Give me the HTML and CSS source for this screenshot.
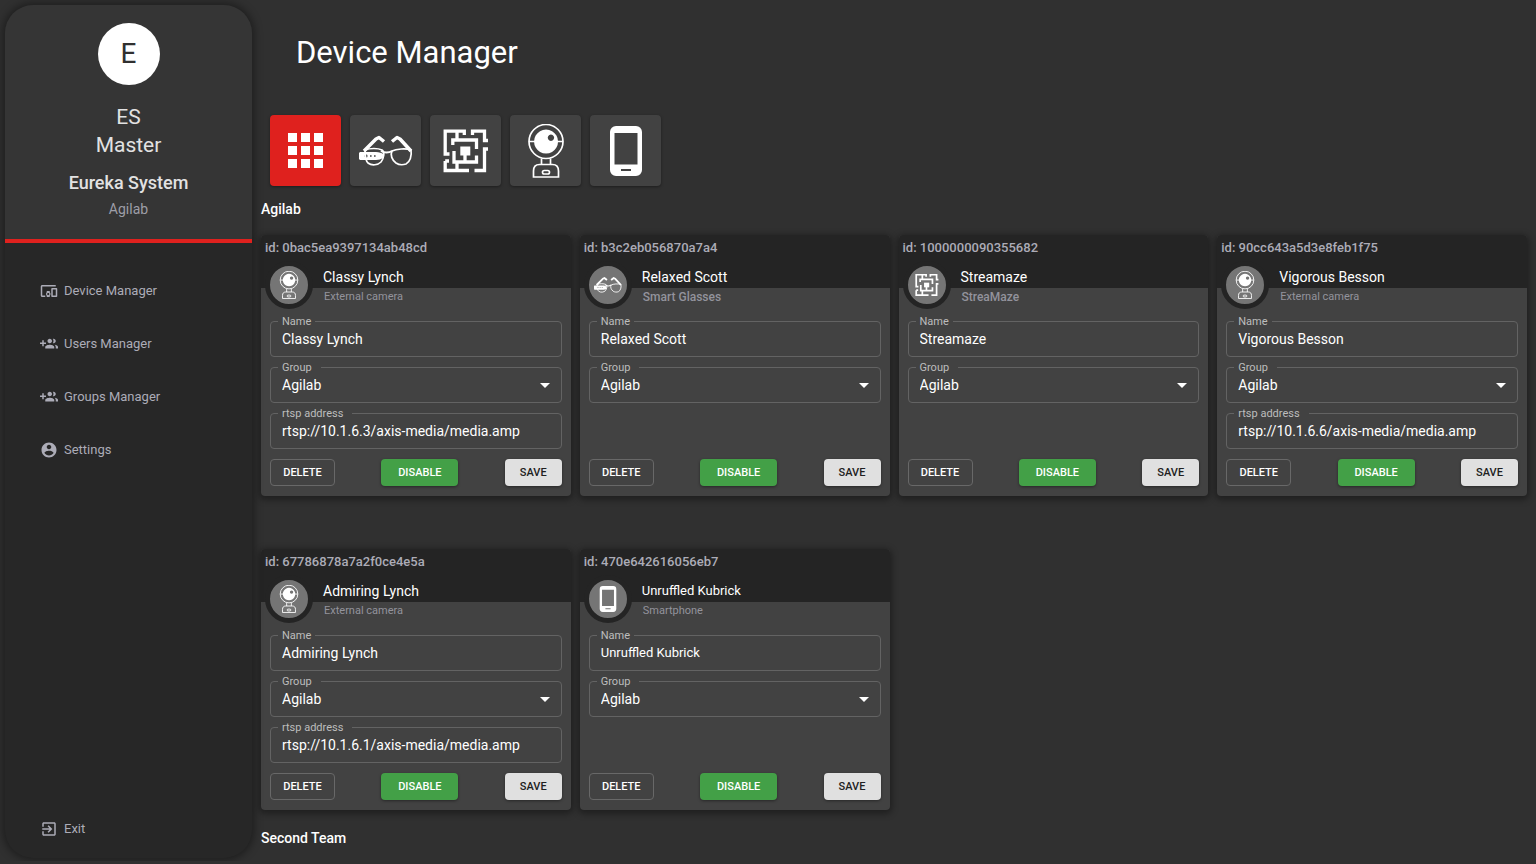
FILE: index.html
```html
<!DOCTYPE html>
<html lang="en">
<head>
    <meta charset="UTF-8">
    <meta name="viewport" content="width=device-width, initial-scale=1.0">
    <title>Device Manager</title>
    <link rel="stylesheet" href="styles.css">
</head>
<body>
    <svg class="sprite" aria-hidden="true">
        <symbol id="glasses" viewBox="0 0 54 54">
            <g fill="none" stroke="currentColor" stroke-linejoin="round">
                <path stroke-width="3.500" d="M5 27 17 15l3-1.500 5 4M52 27 41 15l-3-1.500-5 4"/>
                <path stroke-width="1.700" d="M6 26c5-2 13-2 17 0 3 2 2 8-1 12-3 3-9 4-13 1-2-2-3-5-3-13zM33 27c4-2 14-3 19-1 1 6-1 12-5 14-3 1-7 1-10-1-4-3-6-8-4-12z"/>
                <path stroke-width="2" d="M22 27c3 2 8 2 11 0"/>
            </g>
            <path fill="currentColor" fill-rule="evenodd" d="M1 28h16c3 0 6 1 7 2v4c-2 1-4 2-7 2H1l-1-1v-6zM7 30.500a1.500 1.500 0 1 0 .1 3 1.500 1.500 0 0 0-.1-3zM11 31.200v1.600h1.600v-1.600zM15 31.200v1.600h1.600v-1.600z"/>
        </symbol>
        <symbol id="maze" viewBox="0 0 54 54">
            <path fill="none" stroke="currentColor" stroke-width="3.300" d="M10.500 30H6.200V7.200H25.300V11M18 7v9M33.500 11V7.200H45.500V16.500H49M49 25H45.500V46.500H35.500M6.200 37V46.500H30M6.200 37H10M18 47V38M13.800 21V16H37.500V25M15 27V38H37.500V31.500M26 31V38"/>
            <path fill="currentColor" d="M21.300 22.500h10v9h-10z"/>
        </symbol>
        <symbol id="webcam" viewBox="0 0 54 54">
            <g fill="none" stroke="currentColor" stroke-width="1.700">
                <circle cx="27" cy="17.500" r="17"/>
                <path d="M10 17.500h6M38 17.500h6M22.500 34.500v6M31.500 34.500v6M14.500 53v-6c0-4 2-6.500 6-6.500h13c4 0 6 2.500 6 6.500v6z"/>
                <rect x="23.500" y="46.500" width="7" height="3.500" rx="1.700"/>
            </g>
            <path fill="currentColor" fill-rule="evenodd" d="M27 5.500a12 12 0 1 0 .1 0zM32 10.500a3.200 3.200 0 1 1-.1 0z"/>
        </symbol>
        <symbol id="phone" viewBox="0 0 54 54">
            <path fill="currentColor" fill-rule="evenodd" d="M17 2h20a6 6 0 0 1 6 6v38a6 6 0 0 1-6 6H17a6 6 0 0 1-6-6V8a6 6 0 0 1 6-6zM15.500 9v31.500h23V9zM22 45v2h10v-2z"/>
        </symbol>
        <symbol id="grid" viewBox="0 0 54 54">
            <path fill="currentColor" d="M9 9h9v9H9zM22 9h9v9H22zM35 9h9v9H35zM9 22h9v9H9zM22 22h9v9H22zM35 22h9v9H35zM9 35h9v9H9zM22 35h9v9H22zM35 35h9v9H35z"/>
        </symbol>
        <symbol id="devices" viewBox="0 0 24 24">
            <path fill="currentColor" d="M3 6h18V4H3c-1.100 0-2 .9-2 2v12c0 1.100.9 2 2 2h4v-2H3V6zm10 6H9v1.780c-.61.550-1 1.330-1 2.220s.39 1.670 1 2.220V20h4v-1.780c.61-.55 1-1.340 1-2.220s-.39-1.670-1-2.220V12zm-2 5.500c-.83 0-1.500-.67-1.500-1.500s.67-1.500 1.500-1.500 1.500.67 1.500 1.500-.67 1.500-1.500 1.500zM22 8h-6c-.5 0-1 .5-1 1v10c0 .5.5 1 1 1h6c.5 0 1-.5 1-1V9c0-.5-.5-1-1-1zm-1 10h-4v-8h4v8z"/>
        </symbol>
        <symbol id="group-add" viewBox="0 0 24 24">
            <path fill="currentColor" d="M8 10H5V7H3v3H0v2h3v3h2v-3h3v-2zm10 1c1.660 0 2.990-1.340 2.990-3S19.660 5 18 5c-.32 0-.63.050-.91.140.57.810.9 1.790.9 2.860s-.34 2.040-.9 2.860c.28.090.59.140.91.140zm-5 0c1.660 0 2.990-1.340 2.990-3S14.660 5 13 5s-3 1.340-3 3 1.340 3 3 3zm6.620 2.160c.83.730 1.380 1.660 1.380 2.840v2h3v-2c0-1.540-2.370-2.490-4.380-2.840zM13 13c-2 0-6 1-6 3v2h12v-2c0-2-4-3-6-3z"/>
        </symbol>
        <symbol id="account" viewBox="0 0 24 24">
            <path fill="currentColor" d="M12 2C6.480 2 2 6.480 2 12s4.480 10 10 10 10-4.480 10-10S17.520 2 12 2zm0 3c1.660 0 3 1.340 3 3s-1.340 3-3 3-3-1.340-3-3 1.340-3 3-3zm0 14.200c-2.500 0-4.710-1.280-6-3.220.03-1.990 4-3.080 6-3.080 1.990 0 5.970 1.090 6 3.080-1.290 1.940-3.500 3.220-6 3.220z"/>
        </symbol>
        <symbol id="exit" viewBox="0 0 24 24">
            <path fill="currentColor" d="M10.090 15.590 11.500 17l5-5-5-5-1.410 1.410L12.670 11H3v2h9.670l-2.580 2.590zM19 3H5c-1.110 0-2 .9-2 2v4h2V5h14v14H5v-4H3v4c0 1.100.89 2 2 2h14c1.100 0 2-.9 2-2V5c0-1.100-.9-2-2-2z"/>
        </symbol>
    </svg>

    <aside class="sidebar">
        <div class="profile">
            <div class="profile-avatar">E</div>
            <div class="profile-name">ES<br>Master</div>
            <div class="profile-company">Eureka System</div>
            <div class="profile-group">Agilab</div>
        </div>
        <nav class="menu">
            <a href="#" class="link"><svg><use href="#devices"/></svg>Device Manager</a>
            <a href="#" class="link"><svg><use href="#group-add"/></svg>Users Manager</a>
            <a href="#" class="link"><svg><use href="#group-add"/></svg>Groups Manager</a>
            <a href="#" class="link"><svg><use href="#account"/></svg>Settings</a>
            <a href="#" class="link exit"><svg><use href="#exit"/></svg>Exit</a>
        </nav>
    </aside>

    <main class="content">
        <h1>Device Manager</h1>
        <div class="filters">
            <button class="filter active" aria-label="All devices"><svg><use href="#grid"/></svg></button>
            <button class="filter" aria-label="Smart glasses"><svg><use href="#glasses"/></svg></button>
            <button class="filter" aria-label="StreaMaze"><svg><use href="#maze"/></svg></button>
            <button class="filter" aria-label="External camera"><svg><use href="#webcam"/></svg></button>
            <button class="filter" aria-label="Smartphone"><svg><use href="#phone"/></svg></button>
        </div>

        <h2>Agilab</h2>
        <div class="cards">
            <form class="card">
                <div class="card-header">
                    <div class="card-id">id: 0bac5ea9397134ab48cd</div>
                    <div class="card-device">
                        <div class="card-icon"><svg><use href="#webcam"/></svg></div>
                        <div>
                            <div class="card-name">Classy Lynch</div>
                            <div class="card-type">External camera</div>
                        </div>
                    </div>
                </div>
                <div class="card-fields">
                    <fieldset class="field">
                        <legend><label for="name1">Name</label></legend>
                        <input type="text" id="name1" value="Classy Lynch">
                    </fieldset>
                    <fieldset class="field select">
                        <legend><label for="group1">Group</label></legend>
                        <select id="group1"><option>Agilab</option><option>Second Team</option></select>
                    </fieldset>
                    <fieldset class="field address">
                        <legend><label for="rtsp1">rtsp address</label></legend>
                        <input type="text" id="rtsp1" value="rtsp://10.1.6.3/axis-media/media.amp">
                    </fieldset>
                </div>
                <div class="card-actions">
                    <button type="button" class="btn delete">DELETE</button>
                    <button type="button" class="btn disable">DISABLE</button>
                    <button type="button" class="btn save">SAVE</button>
                </div>
            </form>

            <form class="card">
                <div class="card-header">
                    <div class="card-id">id: b3c2eb056870a7a4</div>
                    <div class="card-device">
                        <div class="card-icon"><svg><use href="#glasses"/></svg></div>
                        <div>
                            <div class="card-name">Relaxed Scott</div>
                            <div class="card-type strong">Smart Glasses</div>
                        </div>
                    </div>
                </div>
                <div class="card-fields">
                    <fieldset class="field">
                        <legend><label for="name2">Name</label></legend>
                        <input type="text" id="name2" value="Relaxed Scott">
                    </fieldset>
                    <fieldset class="field select">
                        <legend><label for="group2">Group</label></legend>
                        <select id="group2"><option>Agilab</option><option>Second Team</option></select>
                    </fieldset>
                </div>
                <div class="card-actions">
                    <button type="button" class="btn delete">DELETE</button>
                    <button type="button" class="btn disable">DISABLE</button>
                    <button type="button" class="btn save">SAVE</button>
                </div>
            </form>

            <form class="card">
                <div class="card-header">
                    <div class="card-id">id: 1000000090355682</div>
                    <div class="card-device">
                        <div class="card-icon"><svg><use href="#maze"/></svg></div>
                        <div>
                            <div class="card-name">Streamaze</div>
                            <div class="card-type strong">StreaMaze</div>
                        </div>
                    </div>
                </div>
                <div class="card-fields">
                    <fieldset class="field">
                        <legend><label for="name3">Name</label></legend>
                        <input type="text" id="name3" value="Streamaze">
                    </fieldset>
                    <fieldset class="field select">
                        <legend><label for="group3">Group</label></legend>
                        <select id="group3"><option>Agilab</option><option>Second Team</option></select>
                    </fieldset>
                </div>
                <div class="card-actions">
                    <button type="button" class="btn delete">DELETE</button>
                    <button type="button" class="btn disable">DISABLE</button>
                    <button type="button" class="btn save">SAVE</button>
                </div>
            </form>

            <form class="card">
                <div class="card-header">
                    <div class="card-id">id: 90cc643a5d3e8feb1f75</div>
                    <div class="card-device">
                        <div class="card-icon"><svg><use href="#webcam"/></svg></div>
                        <div>
                            <div class="card-name">Vigorous Besson</div>
                            <div class="card-type">External camera</div>
                        </div>
                    </div>
                </div>
                <div class="card-fields">
                    <fieldset class="field">
                        <legend><label for="name4">Name</label></legend>
                        <input type="text" id="name4" value="Vigorous Besson">
                    </fieldset>
                    <fieldset class="field select">
                        <legend><label for="group4">Group</label></legend>
                        <select id="group4"><option>Agilab</option><option>Second Team</option></select>
                    </fieldset>
                    <fieldset class="field address">
                        <legend><label for="rtsp4">rtsp address</label></legend>
                        <input type="text" id="rtsp4" value="rtsp://10.1.6.6/axis-media/media.amp">
                    </fieldset>
                </div>
                <div class="card-actions">
                    <button type="button" class="btn delete">DELETE</button>
                    <button type="button" class="btn disable">DISABLE</button>
                    <button type="button" class="btn save">SAVE</button>
                </div>
            </form>

            <form class="card">
                <div class="card-header">
                    <div class="card-id">id: 67786878a7a2f0ce4e5a</div>
                    <div class="card-device">
                        <div class="card-icon"><svg><use href="#webcam"/></svg></div>
                        <div>
                            <div class="card-name">Admiring Lynch</div>
                            <div class="card-type">External camera</div>
                        </div>
                    </div>
                </div>
                <div class="card-fields">
                    <fieldset class="field">
                        <legend><label for="name5">Name</label></legend>
                        <input type="text" id="name5" value="Admiring Lynch">
                    </fieldset>
                    <fieldset class="field select">
                        <legend><label for="group5">Group</label></legend>
                        <select id="group5"><option>Agilab</option><option>Second Team</option></select>
                    </fieldset>
                    <fieldset class="field address">
                        <legend><label for="rtsp5">rtsp address</label></legend>
                        <input type="text" id="rtsp5" value="rtsp://10.1.6.1/axis-media/media.amp">
                    </fieldset>
                </div>
                <div class="card-actions">
                    <button type="button" class="btn delete">DELETE</button>
                    <button type="button" class="btn disable">DISABLE</button>
                    <button type="button" class="btn save">SAVE</button>
                </div>
            </form>

            <form class="card">
                <div class="card-header">
                    <div class="card-id">id: 470e642616056eb7</div>
                    <div class="card-device">
                        <div class="card-icon"><svg><use href="#phone"/></svg></div>
                        <div>
                            <div class="card-name small">Unruffled Kubrick</div>
                            <div class="card-type">Smartphone</div>
                        </div>
                    </div>
                </div>
                <div class="card-fields">
                    <fieldset class="field">
                        <legend><label for="name6">Name</label></legend>
                        <input type="text" class="small" id="name6" value="Unruffled Kubrick">
                    </fieldset>
                    <fieldset class="field select">
                        <legend><label for="group6">Group</label></legend>
                        <select id="group6"><option>Agilab</option><option>Second Team</option></select>
                    </fieldset>
                </div>
                <div class="card-actions">
                    <button type="button" class="btn delete">DELETE</button>
                    <button type="button" class="btn disable">DISABLE</button>
                    <button type="button" class="btn save">SAVE</button>
                </div>
            </form>
        </div>

        <h2>Second Team</h2>
    </main>
</body>
</html>
```
FILE: styles.css
```css
* {
    box-sizing: border-box;
}

body {
    margin: 0;
    background-color: #303030;
    color: white;
    font-family: Roboto, sans-serif;
    font-size: 14px;
    display: flex;
    align-items: flex-start;
}

.sprite {
    display: none;
}

.sidebar {
    position: sticky;
    top: 5px;
    flex: 0 0 247px;
    height: calc(100vh - 11px);
    margin: 5px 9px 0 5px;
    border-radius: 28px;
    background-color: #272727;
    box-shadow: 0 0 9px 2px rgba(0, 0, 0, 0.4);
    display: flex;
    flex-direction: column;
    overflow: hidden;
}

.profile {
    background-color: #353535;
    border-bottom: 4px solid #df211e;
    padding: 18px 0;
    text-align: center;
    color: #e2e2e2;
}

.profile-avatar {
    width: 62px;
    height: 62px;
    margin: 0 auto;
    border-radius: 50%;
    background-color: white;
    color: #303030;
    font-size: 28px;
    line-height: 62px;
}

.profile-name {
    margin-top: 18px;
    font-size: 21px;
    line-height: 28px;
}

.profile-company {
    margin-top: 10px;
    font-size: 18px;
    font-weight: 500;
    line-height: 28px;
}

.profile-group {
    font-size: 14px;
    line-height: 24px;
    color: #9e9ea7;
}

.menu {
    flex: 1;
    display: flex;
    flex-direction: column;
    gap: 33px;
    padding: 38px 0 19px 35px;
}

.link {
    display: flex;
    align-items: center;
    gap: 6px;
    font-size: 13px;
    line-height: 20px;
    color: #acacb7;
    text-decoration: none;
}

.link svg {
    width: 18px;
    height: 18px;
}

.link:hover {
    color: white;
}

.exit {
    margin-top: auto;
}

.content {
    flex: 1;
    min-width: 0;
    padding-right: 9px;
}

h1 {
    margin: 0 0 42px 35px;
    padding-top: 33px;
    font-size: 31px;
    font-weight: 400;
    line-height: 40px;
}

h2 {
    margin: 13px 0;
    font-size: 14px;
    font-weight: 500;
    line-height: 20px;
}

.filters {
    display: flex;
    gap: 9px;
    padding-left: 9px;
}

.filter {
    width: 71px;
    height: 71px;
    padding: 0;
    border: none;
    border-radius: 4px;
    background-color: #424242;
    color: white;
    box-shadow: 0 1px 3px rgba(0, 0, 0, 0.4);
    display: grid;
    place-items: center;
    cursor: pointer;
}

.filter.active {
    background-color: #df211e;
}

.filter svg {
    width: 54px;
    height: 54px;
}

.cards {
    display: grid;
    grid-template-columns: repeat(auto-fill, minmax(300px, 1fr));
    gap: 53px 9px;
    margin: 16px 0 18px;
}

.card {
    min-height: 261px;
    padding-bottom: 10px;
    border-radius: 4px;
    background-color: #424242;
    box-shadow: 0 2px 6px 2px rgba(0, 0, 0, 0.35);
    display: flex;
    flex-direction: column;
}

.card-header {
    height: 53px;
    padding: 3px 4px 0;
    border-radius: 4px 4px 0 0;
    background-color: #242424;
}

.card-id {
    font-size: 13px;
    font-weight: 500;
    line-height: 20px;
    color: #acacb7;
}

.card-device {
    display: flex;
    gap: 10px;
    margin-top: 3px;
}

.card-icon {
    width: 48px;
    height: 48px;
    border: 5px solid #242424;
    border-radius: 50%;
    background-color: #757575;
    display: grid;
    place-items: center;
}

.card-icon svg {
    width: 28px;
    height: 28px;
}

.card-name {
    margin-top: 6px;
    line-height: 20px;
}

.card-type {
    padding-left: 1px;
    font-size: 11px;
    line-height: 20px;
    color: #93939c;
}

.card-type.strong {
    font-size: 12px;
    font-weight: 500;
}

.card-fields {
    display: flex;
    flex-direction: column;
    gap: 4px;
    margin-top: 27px;
    padding: 0 9px;
}

.field {
    min-width: 0;
    height: 42px;
    margin: 0;
    padding: 0;
    border: 1px solid #636363;
    border-radius: 4px;
    position: relative;
}

.field legend {
    height: 13px;
    margin-left: 7px;
    padding: 0 4px;
    font-size: 11px;
    line-height: 13px;
    color: #bdbdbd;
}

.field.select legend,
.field.address legend {
    padding-right: 9px;
}

.field input,
.field select {
    display: block;
    width: 100%;
    height: 21px;
    padding: 0 11px;
    border: none;
    outline: none;
    background: none;
    color: white;
    font-family: inherit;
    font-size: 14px;
    appearance: none;
}

.card-name.small,
.field input.small {
    font-size: 13px;
}

.field.select option {
    background-color: #424242;
}

.field.select::after {
    content: "";
    position: absolute;
    right: 11px;
    top: 9px;
    border: 5px solid transparent;
    border-top-color: white;
    pointer-events: none;
}

.card-actions {
    display: flex;
    justify-content: space-between;
    margin-top: auto;
    padding: 0 9px;
}

.btn {
    height: 27px;
    padding: 0;
    border: none;
    border-radius: 4px;
    font-family: inherit;
    font-size: 11px;
    font-weight: 500;
    cursor: pointer;
}

.btn.delete {
    width: 65px;
    border: 1px solid #686868;
    background: none;
    color: white;
}

.btn.disable {
    width: 77px;
    background-color: #43a047;
    color: white;
    box-shadow: 0 1px 3px rgba(0, 0, 0, 0.4);
}

.btn.save {
    width: 57px;
    background-color: #e0e0e0;
    color: #202020;
    box-shadow: 0 1px 3px rgba(0, 0, 0, 0.4);
}
```
